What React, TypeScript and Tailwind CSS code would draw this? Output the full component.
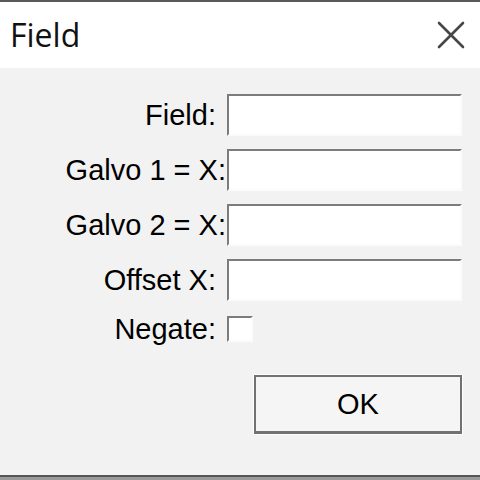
const rows = [
  { label: 'Field:', pad: true },
  { label: 'Galvo 1 = X:', pad: false },
  { label: 'Galvo 2 = X:', pad: false },
  { label: 'Offset X:', pad: true },
];

function CloseIcon() {
  return (
    <svg width="28" height="28" viewBox="0 0 28 28" fill="none">
      <path d="M2 2 L26 26 M26 2 L2 26" stroke="#474747" strokeWidth="2.6" strokeLinecap="round" />
    </svg>
  );
}

export default function App() {
  return (
    <div className="w-[480px] h-[480px] flex flex-col bg-white font-['Liberation_Sans',Arial,sans-serif] text-black">
      {/* title bar */}
      <div className="h-[2px] bg-[#5a5a5a]" />
      <div className="h-[66px] flex items-center justify-between pl-[10px] pr-[15px] bg-white">
        <span className="font-['Open_Sans',sans-serif] text-[32px] leading-none text-[#111]">Field</span>
        <CloseIcon />
      </div>

      {/* body */}
      <div className="h-[407px] bg-[#f2f2f2] pt-[26px] pr-[18px] flex flex-col text-[29px] leading-none">
        <div className="flex flex-col gap-[13px]">
          {rows.map((r) => (
            <div key={r.label} className="flex items-center h-[42px]">
              <div className={`w-[227px] shrink-0 text-right whitespace-nowrap ${r.pad ? 'pr-[11px]' : 'pr-[1px]'}`}>
                {r.label}
              </div>
              <div className="flex-1 h-[42px] bg-white border-2 border-t-[#7c7c7c] border-l-[#7c7c7c] border-b-[#fbfbfb] border-r-[#fbfbfb]" />
            </div>
          ))}
          <div className="flex items-center h-[30px]">
            <div className="w-[227px] shrink-0 text-right pr-[11px]">Negate:</div>
            <div className="w-[26px] h-[26px] bg-white border-2 border-t-[#7c7c7c] border-l-[#7c7c7c] border-b-[#fbfbfb] border-r-[#fbfbfb]" />
          </div>
        </div>
        <div className="flex justify-end mt-[31px]">
          <button className="w-[208px] h-[59px] bg-[#f5f5f5] border-2 border-b-[3px] border-[#727272] shadow-[0_0_0_1px_#fdfdfd] text-[29px] leading-none text-black">
            OK
          </button>
        </div>
      </div>
      <div className="h-[2px] bg-[#555]" />
      <div className="h-[3px] bg-[#9a9a9a]" />
    </div>
  );
}
